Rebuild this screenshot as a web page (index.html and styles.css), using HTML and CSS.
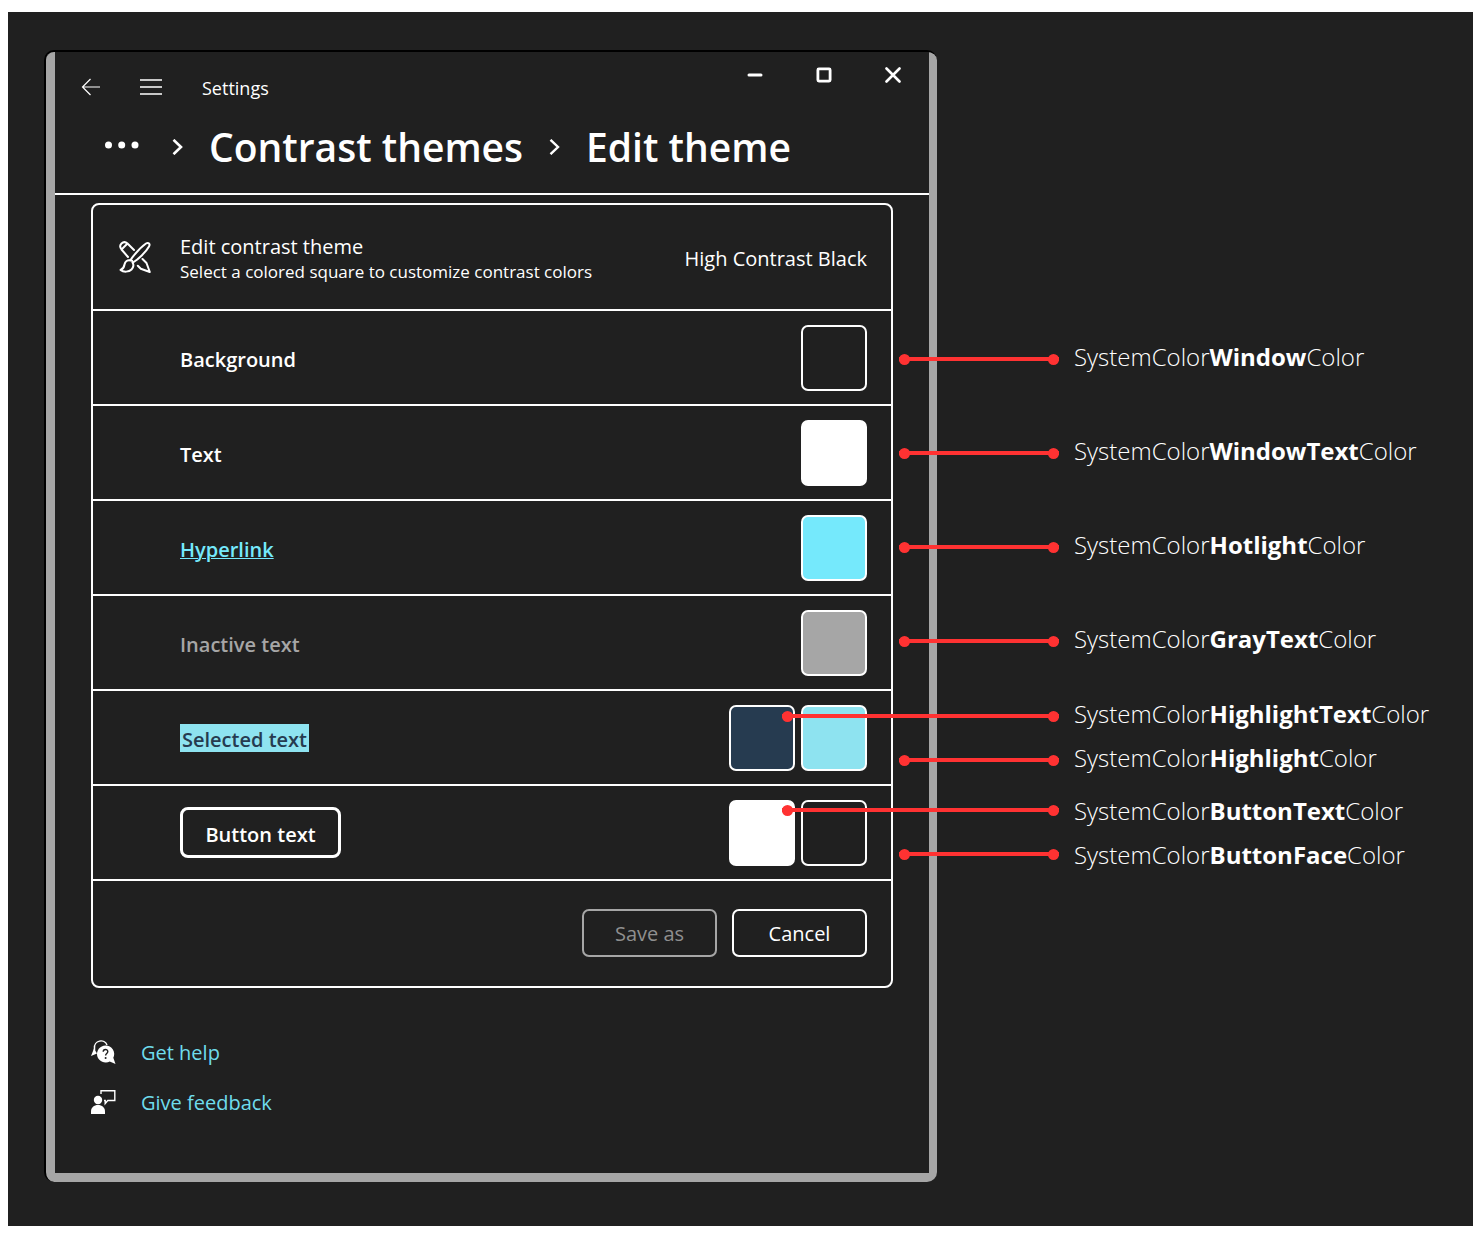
FILE: index.html
```html
<!DOCTYPE html>
<html lang="en">
<head>
<meta charset="utf-8">
<title>Edit theme</title>
<link rel="stylesheet" href="styles.css">
</head>
<body>
<main class="canvas">
  <section class="window">
    <div class="window-body">
      <header class="window-header">
        <div class="titlebar">
          <button class="nav-button" type="button" aria-label="Back">
            <svg width="20" height="18" viewBox="0 0 20 18" fill="none" stroke="currentColor" stroke-width="1.2"><path d="M19 9H1.500M9.500 1 1.500 9l8 8"/></svg>
          </button>
          <button class="nav-button" type="button" aria-label="Menu">
            <svg width="22" height="18" viewBox="0 0 22 18" fill="none" stroke="currentColor" stroke-width="1.500"><path d="M0 2h22M0 9h22M0 16h22"/></svg>
          </button>
          <span class="app-name">Settings</span>
          <div class="window-controls">
            <button class="control" type="button" aria-label="Minimize">
              <svg width="16" height="16" viewBox="0 0 16 16" fill="none" stroke="currentColor" stroke-width="3" stroke-linecap="round"><path d="M2 8h12"/></svg>
            </button>
            <button class="control" type="button" aria-label="Maximize">
              <svg width="16" height="16" viewBox="0 0 16 16" fill="none" stroke="currentColor" stroke-width="2.800"><rect x="1.900" y="1.900" width="12.200" height="12.200" rx="1"/></svg>
            </button>
            <button class="control" type="button" aria-label="Close">
              <svg width="16" height="16" viewBox="0 0 16 16" fill="none" stroke="currentColor" stroke-width="2.600" stroke-linecap="round"><path d="m1.500 1.500 13 13M14.500 1.500l-13 13"/></svg>
            </button>
          </div>
        </div>
        <nav class="breadcrumb" aria-label="Breadcrumb">
          <button class="more" type="button" aria-label="More">
            <svg width="34" height="12" viewBox="0 0 34 12" fill="currentColor"><circle cx="3.500" cy="4" r="3.500"/><circle cx="16.700" cy="4" r="3.500"/><circle cx="30" cy="4" r="3.500"/></svg>
          </button>
          <svg width="11" height="16" viewBox="0 0 11 16" fill="none" stroke="currentColor" stroke-width="2.600"><path d="m1.500.8 7.500 7.200-7.500 7.200"/></svg>
          <a class="crumb" href="#themes">Contrast themes</a>
          <svg width="11" height="16" viewBox="0 0 11 16" fill="none" stroke="currentColor" stroke-width="2.400"><path d="m1.500.8 7.500 7.200-7.500 7.200"/></svg>
          <h1 class="crumb">Edit theme</h1>
        </nav>
      </header>

      <div class="card">
        <div class="row row-head">
          <svg class="row-icon" width="32" height="32" viewBox="0 0 32 32" fill="none" stroke="currentColor" stroke-width="2" stroke-linejoin="round" stroke-linecap="round">
            <path d="M11.500 19C15 14 22 6 27 2.500c2.500-1.500 4.500.5 3 3C27 11 19 18.500 14 21.500"/>
            <path d="M11.500 19c1.300.3 2.200 1.200 2.500 2.500"/>
            <path d="M11.500 19.500c-3-1-5.500 1-6 4-.4 2.800-1.500 4.500-4 5.500 3 2.300 8.500 2.200 11-.5 2-2.200 2.300-5 1-7"/>
            <path d="M9 16 2.500 8.500C.5 6 1 4 2.500 2.500S6.500.7 8.500 2.500L15 9M2.500 8.500l6-6"/>
            <path d="m23.500 18 4 4 3.300 9-9-3.300-3-3"/>
          </svg>
          <div class="head-text">
            <h2 class="head-title">Edit contrast theme</h2>
            <p class="head-note">Select a colored square to customize contrast colors</p>
          </div>
          <span class="theme-name">High Contrast Black</span>
        </div>
        <div class="row">
          <span class="label">Background</span>
          <div class="swatches"><button class="swatch swatch-window" type="button" aria-label="Background color"></button></div>
        </div>
        <div class="row">
          <span class="label">Text</span>
          <div class="swatches"><button class="swatch swatch-text" type="button" aria-label="Text color"></button></div>
        </div>
        <div class="row">
          <a class="label label-link" href="#hyperlink">Hyperlink</a>
          <div class="swatches"><button class="swatch swatch-link" type="button" aria-label="Hyperlink color"></button></div>
        </div>
        <div class="row">
          <span class="label label-inactive">Inactive text</span>
          <div class="swatches"><button class="swatch swatch-gray" type="button" aria-label="Inactive text color"></button></div>
        </div>
        <div class="row">
          <span class="label label-selected">Selected text</span>
          <div class="swatches">
            <button class="swatch swatch-highlight-text" type="button" aria-label="Selected text color"></button>
            <button class="swatch swatch-highlight" type="button" aria-label="Selected text background"></button>
          </div>
        </div>
        <div class="row">
          <button class="label label-button" type="button">Button text</button>
          <div class="swatches">
            <button class="swatch swatch-text" type="button" aria-label="Button text color"></button>
            <button class="swatch swatch-window" type="button" aria-label="Button background"></button>
          </div>
        </div>
        <div class="actions">
          <button class="action" type="button" disabled>Save as</button>
          <button class="action" type="button">Cancel</button>
        </div>
      </div>

      <footer class="links">
        <a class="link" href="#help">
          <svg width="25" height="26" viewBox="0 0 25 26" fill="currentColor"><path d="M3.500 11.500V9a6.500 6.500 0 0 1 12.500-3" fill="none" stroke="currentColor" stroke-width="1.500"/><path d="M3 9.500 0 17l6-2.500z"/><path d="M14.500 6.500a8.500 8.500 0 1 0 4.200 15.900L24.500 25l-2.200-6.200A8.500 8.500 0 0 0 14.500 6.500z"/><path d="M12.200 12.800c0-3 4.600-3 4.600-.2 0 1.900-2.200 2-2.200 4" fill="none" stroke="#202020" stroke-width="1.400"/><circle cx="14.600" cy="19" r="1" fill="#202020"/></svg>
          <span>Get help</span>
        </a>
        <a class="link" href="#feedback">
          <svg width="25" height="26" viewBox="0 0 25 26" fill="currentColor"><circle cx="7" cy="11" r="4.200"/><path d="M0 25v-2.500C0 18.500 3 16 7 16s7 2.500 7 6.500V25z"/><path d="M10 5V1.800h13.800V11.500h-7l-2.600 3v-3h-1.200" fill="none" stroke="currentColor" stroke-width="1.400"/></svg>
          <span>Give feedback</span>
        </a>
      </footer>
    </div>
  </section>

  <ul class="notes">
    <li class="note"><span class="line"></span><span class="note-text">SystemColor<b>Window</b>Color</span></li>
    <li class="note"><span class="line"></span><span class="note-text">SystemColor<b>WindowText</b>Color</span></li>
    <li class="note"><span class="line"></span><span class="note-text">SystemColor<b>Hotlight</b>Color</span></li>
    <li class="note"><span class="line"></span><span class="note-text">SystemColor<b>GrayText</b>Color</span></li>
    <li class="note-pair">
      <div class="note"><span class="line line-long"></span><span class="note-text">SystemColor<b>HighlightText</b>Color</span></div>
      <div class="note"><span class="line"></span><span class="note-text">SystemColor<b>Highlight</b>Color</span></div>
    </li>
    <li class="note-pair note-pair-low">
      <div class="note"><span class="line line-long"></span><span class="note-text">SystemColor<b>ButtonText</b>Color</span></div>
      <div class="note"><span class="line"></span><span class="note-text">SystemColor<b>ButtonFace</b>Color</span></div>
    </li>
  </ul>
</main>
</body>
</html>
```
FILE: styles.css
```css
* { box-sizing: border-box; }

body {
  margin: 0;
  padding: 12px 8px 19px;
  background: #fff;
  color: #fff;
  font-family: "Open Sans", "Noto Sans", sans-serif;
  font-size: 20px;
  line-height: 28px;
}

h1, h2, p, ul { margin: 0; padding: 0; }

button {
  margin: 0;
  padding: 0;
  border: 0;
  background: none;
  color: inherit;
  font: inherit;
}

svg { display: block; flex: none; }

.canvas {
  display: grid;
  grid-template-columns: minmax(0, 893fr) minmax(0, 536fr);
  align-items: start;
  padding: 38px 0 44px 36px;
  background: #202020;
}

.window {
  padding: 0 8px 9px 9px;
  border: solid #000;
  border-width: 2px 0 0 2px;
  border-radius: 10px;
  background: #a6a6a6;
}

.window-body { background: #202020; }

.window-header { border-bottom: 2px solid #fff; }

.titlebar {
  display: flex;
  align-items: center;
  height: 70px;
  padding: 0 2px 0 6px;
}

.nav-button {
  display: grid;
  place-items: center;
  width: 60px;
  height: 46px;
}

.app-name { padding: 2px 0 0 21px; font-size: 18px; }

.window-controls {
  display: flex;
  align-self: flex-start;
  margin-left: auto;
}

.control {
  display: grid;
  place-items: center;
  width: 69px;
  height: 45px;
}

.breadcrumb {
  display: flex;
  align-items: center;
  gap: 26px;
  height: 71px;
  padding: 0 0 22px 50px;
}

.more { padding-right: 7px; }

.crumb {
  color: #fff;
  font-size: 39px;
  font-weight: 600;
  line-height: 48px;
  text-decoration: none;
}

.card {
  margin: 8px 36px 0;
  border: 2px solid #fff;
  border-radius: 8px;
}

.row {
  display: flex;
  align-items: center;
  justify-content: space-between;
  height: 95px;
  padding: 0 24px 0 87px;
  border-bottom: 2px solid #fff;
}

.row-head { height: 106px; padding-left: 26px; }

.head-text { flex: 1; padding: 3px 0 0 29px; }
.head-title { font-size: 20px; font-weight: 400; line-height: 26px; }
.head-note { font-size: 17px; font-weight: 500; line-height: 24px; }
.theme-name { padding-top: 3px; }

.label { padding-top: 4px; font-weight: 600; line-height: 24px; }
.label-link { color: #75e9fc; text-decoration-thickness: 1px; }
.label-inactive { color: #a6a6a6; }
.label-selected { padding: 4px 2px 0; background: #8ee3f0; color: #263b50; }

.label-button {
  width: 161px;
  height: 51px;
  border: 3px solid #fff;
  border-radius: 8px;
}

.swatches { display: flex; gap: 6px; }

.swatch {
  width: 66px;
  height: 66px;
  border: 2px solid #fff;
  border-radius: 7px;
}

.swatch-window { background: #202020; }
.swatch-text { background: #fff; }
.swatch-link { background: #75e9fc; }
.swatch-gray { background: #a6a6a6; }
.swatch-highlight-text { background: #263b50; }
.swatch-highlight { background: #8ee3f0; }

.actions {
  display: flex;
  justify-content: flex-end;
  gap: 15px;
  padding: 28px 24px 29px;
}

.action {
  width: 135px;
  height: 48px;
  padding-top: 2px;
  border: 2px solid #fff;
  border-radius: 7px;
}

.action:disabled { border-color: #a6a6a6; color: #8f8f8f; }

.links {
  display: grid;
  gap: 20px;
  padding: 49px 36px 56px;
}

.link {
  display: flex;
  align-items: center;
  gap: 25px;
  color: #6fdcec;
  text-decoration: none;
}

.link span { padding-top: 2px; }
.link svg { color: #fff; }

.notes {
  position: relative;
  padding-top: 262px;
  list-style: none;
  font-size: 24px;
  font-weight: 300;
  white-space: nowrap;
}

.notes b { font-weight: 700; }

.note {
  display: flex;
  align-items: center;
  gap: 15px;
  height: 94px;
}

.note-text { padding-bottom: 4px; }

.note-pair { padding-top: 6px; }
.note-pair .note { height: 44px; }
.note-pair-low .note-text { padding: 2px 0 0; }

/* Pointer that reaches back over the window to a swatch */
.line {
  display: flex;
  flex: none;
  align-items: center;
  justify-content: space-between;
  width: 160px;
  height: 4px;
  margin-left: -38px;
  background: #ff3232;
}

.line::before,
.line::after {
  content: "";
  width: 11px;
  height: 11px;
  border-radius: 50%;
  background: #ff3232;
}

.line-long { width: 277px; margin-left: -155px; }
```
